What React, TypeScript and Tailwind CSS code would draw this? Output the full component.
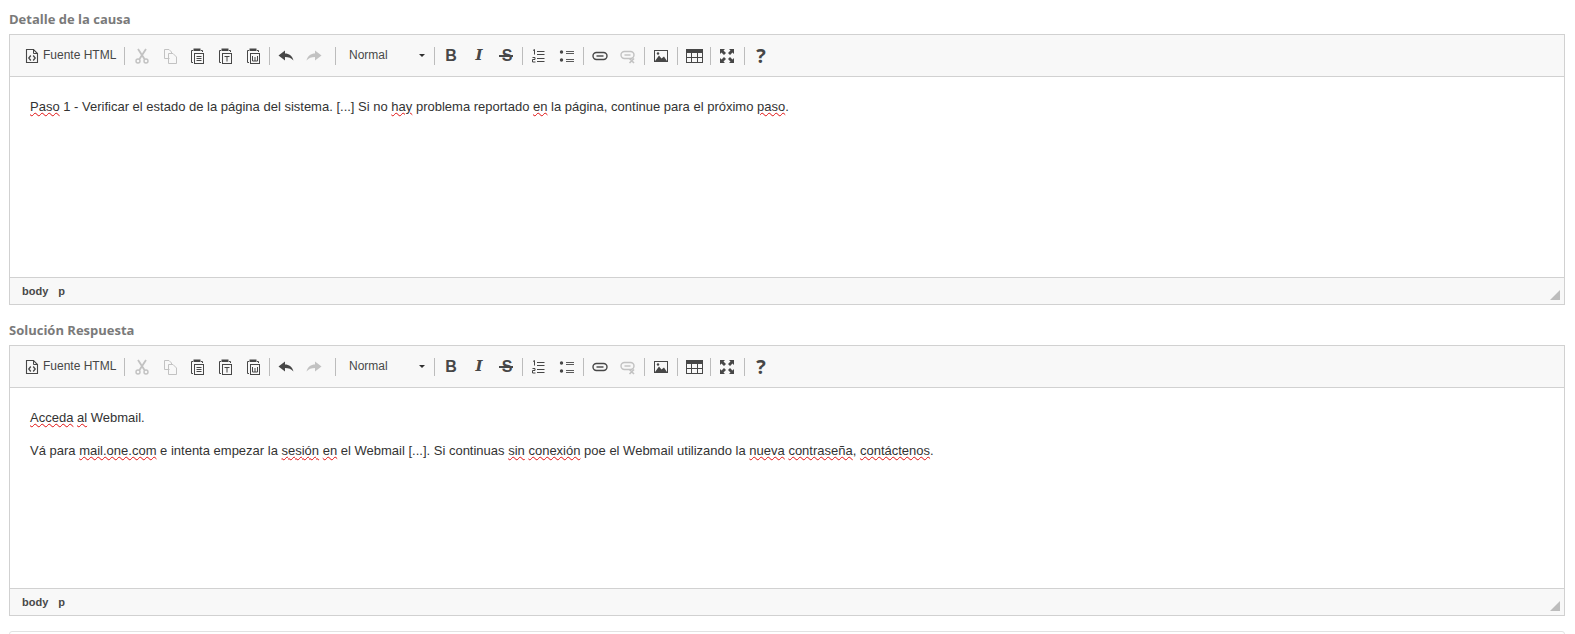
import type { ReactNode } from "react";

const arial = "font-['Liberation_Sans',Arial,sans-serif]";

function Sep({ className = "" }: { className?: string }) {
  return <span className={`h-[18px] w-px shrink-0 bg-[#bcbcbc] ${className}`} />;
}

function Btn({ children, off }: { children: ReactNode; off?: boolean }) {
  return (
    <span className={`flex h-[28px] w-[28px] shrink-0 items-center justify-center text-[#474747] ${off ? "opacity-30" : ""}`}>
      {children}
    </span>
  );
}

function Icon({ children }: { children: ReactNode }) {
  return (
    <svg width="16" height="16" viewBox="0 0 16 16" fill="none" stroke="currentColor" strokeWidth="1">
      {children}
    </svg>
  );
}

function Clipboard({ children }: { children: ReactNode }) {
  return (
    <Icon>
      <path d="M3 2.5H1.5V14.5H3M11 2.5H12.5V4" />
      <path d="M3.5 0.5H10.5V3H3.5Z" fill="currentColor" stroke="none" />
      <rect x="4.5" y="5.5" width="9" height="10" />
      {children}
    </Icon>
  );
}

function Toolbar() {
  return (
    <div className="flex h-[42px] items-center border-b border-[#d1d1d1] bg-[#f8f8f8] pl-[14px]">
      <div className={`flex w-[100px] shrink-0 items-center ${arial} text-[12px] text-[#474747]`}>
        <span className="flex text-[#474747]">
          <Icon>
            <path d="M2.5 1.5H9.5L13.5 5.5V14.5H2.5Z" strokeWidth="1.1" />
            <path d="M9.5 1.5V5.5H13.5" />
            <path d="M6.8 7.5L4.8 10L6.8 12.5M9.2 7.5L11.2 10L9.2 12.5" strokeWidth="1.3" />
          </Icon>
        </span>
        <span className="mb-[2px] ml-[3px] whitespace-nowrap">Fuente HTML</span>
      </div>
      <Sep className="mr-[3px]" />
      <Btn off>
        <Icon>
          <path d="M4 1L10.5 11M12 1L5.5 11" strokeWidth="1.8" />
          <circle cx="4" cy="13" r="2" strokeWidth="1.4" />
          <circle cx="12" cy="13" r="2" strokeWidth="1.4" />
        </Icon>
      </Btn>
      <Btn off>
        <Icon>
          <path d="M7.5 10.5H2.5V1.5H7L9.5 4V5" />
          <path d="M6.5 5.5H11L14.5 9V15.5H6.5Z" />
        </Icon>
      </Btn>
      <Btn>
        <Clipboard>
          <path d="M6.5 8.5H11.5M6.5 10.5H11.5M6.5 12.5H11.5" />
        </Clipboard>
      </Btn>
      <Btn>
        <Clipboard>
          <path d="M6.5 8.5H11.5M9 8.5V13.5" />
        </Clipboard>
      </Btn>
      <Btn>
        <Clipboard>
          <path d="M6.5 8V13H11.5V8M9 9V13" />
        </Clipboard>
      </Btn>
      <Sep className="ml-px mr-[2px]" />
      <Btn>
        <Icon>
          <path d="M0.5 7.5L7 2.5V5.5C11 5.5 14.5 8 15.5 12.5C13.5 10 10.5 9 7 9V12.5Z" fill="currentColor" stroke="none" />
        </Icon>
      </Btn>
      <Btn off>
        <Icon>
          <path d="M15.5 7.5L9 2.5V5.5C5 5.5 1.5 8 0.5 12.5C2.5 10 5.5 9 9 9V12.5Z" fill="currentColor" stroke="none" />
        </Icon>
      </Btn>
      <Sep className="ml-[7px]" />
      <div className={`flex w-[98px] shrink-0 items-center pl-[13px] ${arial} text-[12px] text-[#484848]`}>
        <span className="mb-[2px]">Normal</span>
        <span className="ml-[31px] h-0 w-0 border-x-[3px] border-t-[3px] border-x-transparent border-t-[#2f2f2f]" />
      </div>
      <Sep className="mr-[2px]" />
      <Btn>
        <span className={`${arial} text-[16px] font-bold leading-none`}>B</span>
      </Btn>
      <Btn>
        <span className="font-['DejaVu_Serif',serif] text-[15px] font-bold italic leading-none">I</span>
      </Btn>
      <Btn>
        <span className={`relative ${arial} text-[16px] font-bold leading-none`}>
          S
          <span className="absolute left-[-3px] top-[7px] h-[2px] w-[14px] bg-[#474747]" />
        </span>
      </Btn>
      <Sep className="ml-px mr-[2px]" />
      <Btn>
        <Icon>
          <path d="M6 3.5H13.5M6 6.5H13.5M6 10.5H13.5M6 13.5H13.5" />
          <path d="M2 2.5L3.5 1.5V6.5M1.5 9.5H4V11.5H1.5V14H4.5" />
        </Icon>
      </Btn>
      <Btn>
        <Icon>
          <circle cx="2.5" cy="4" r="1.7" fill="currentColor" stroke="none" />
          <circle cx="2.5" cy="12" r="1.7" fill="currentColor" stroke="none" />
          <path d="M7 3.5H15M7 11.5H15M7 5.5H15M7 13.5H15" strokeWidth="0.9" />
        </Icon>
      </Btn>
      <Sep className="ml-[2px] mr-[2px]" />
      <Btn>
        <Icon>
          <rect x="1" y="4.5" width="14" height="7" rx="3.5" strokeWidth="1.4" />
          <path d="M4.5 8H11.5" strokeWidth="1.4" />
        </Icon>
      </Btn>
      <Btn off>
        <Icon>
          <rect x="1" y="3.5" width="13" height="7" rx="3.5" strokeWidth="1.4" />
          <path d="M4.5 7H10.5" strokeWidth="1.4" />
          <path d="M9.5 10.5L14 15M14 10.5L9.5 15" strokeWidth="1.6" />
        </Icon>
      </Btn>
      <Sep className="ml-[2px] mr-[2px]" />
      <Btn>
        <Icon>
          <rect x="1.5" y="2.5" width="13" height="11" />
          <path d="M2 13L6 7.5L8.5 10.5L11 8.5L14 13Z" fill="currentColor" stroke="none" />
          <circle cx="5" cy="5.5" r="1.2" fill="currentColor" stroke="none" />
        </Icon>
      </Btn>
      <Sep className="ml-[2px] mr-[2px]" />
      <Btn>
        <svg width="17" height="16" viewBox="0 0 17 16" fill="none" stroke="currentColor">
          <rect x="0.5" y="1.5" width="16" height="13" />
          <path d="M0 3.5H17" strokeWidth="3" />
          <path d="M0.5 9.5H16.5M5.5 5V14M11.5 5V14" />
        </svg>
      </Btn>
      <Sep className="ml-[2px] mr-[2px]" />
      <Btn>
        <Icon>
          <path d="M1 1H6L4.5 2.5L7 5L5 7L2.5 4.5L1 6Z" fill="currentColor" stroke="none" />
          <path d="M15 1H10L11.5 2.5L9 5L11 7L13.5 4.5L15 6Z" fill="currentColor" stroke="none" />
          <path d="M1 15H6L4.5 13.5L7 11L5 9L2.5 11.5L1 10Z" fill="currentColor" stroke="none" />
          <path d="M15 15H10L11.5 13.5L9 11L11 9L13.5 11.5L15 10Z" fill="currentColor" stroke="none" />
        </Icon>
      </Btn>
      <Sep className="ml-[3px] mr-[2px]" />
      <Btn>
        <span className="font-['Open_Sans',sans-serif] text-[20px] font-bold leading-none">?</span>
      </Btn>
    </div>
  );
}

function Err({ children }: { children: ReactNode }) {
  return <span className="underline decoration-[#e01010] decoration-wavy decoration-1 underline-offset-[1px]">{children}</span>;
}

function Editor({ label, children }: { label: string; children: ReactNode }) {
  return (
    <section>
      <h2 className="flex h-[21px] items-center pb-[8px] font-['Open_Sans',sans-serif] text-[13px] font-bold text-[#7a7a7a]">{label}</h2>
      <div className="border border-[#d1d1d1]">
        <Toolbar />
        <div className={`h-[200px] bg-white px-[20px] py-[20px] ${arial} text-[13px] leading-[20px] text-[#333333]`}>{children}</div>
        <div className={`relative flex h-[27px] items-center gap-[10px] border-t border-[#d1d1d1] bg-[#f8f8f8] pl-[12px] ${arial} text-[11px] font-bold text-[#484848]`}>
          <span>body</span>
          <span>p</span>
          <span className="absolute bottom-[4px] right-[4px] h-0 w-0 border-b-[10px] border-l-[10px] border-b-[#bdbdbd] border-l-transparent" />
        </div>
      </div>
    </section>
  );
}

export default function App() {
  return (
    <div className="h-[634px] overflow-hidden bg-white pl-[9px] pr-[10px] pt-[13px]">
      <Editor label="Detalle de la causa">
        <p>
          <Err>Paso</Err> 1 - Verificar el estado de la página del sistema. [...] Si no <Err>hay</Err> problema reportado <Err>en</Err> la página, continue para el próximo <Err>paso</Err>.
        </p>
      </Editor>
      <div className="mt-[19px]">
        <Editor label="Solución Respuesta">
          <p>
            <Err>Acceda</Err> <Err>al</Err> Webmail.
          </p>
          <p className="mt-[13px]">
            Vá para <Err>mail.one.com</Err> e intenta empezar la <Err>sesión</Err> <Err>en</Err> el Webmail [...]. Si continuas <Err>sin</Err> <Err>conexión</Err> poe el Webmail utilizando la <Err>nueva</Err> <Err>contraseña</Err>, <Err>contáctenos</Err>.
          </p>
        </Editor>
      </div>
      <div className="mt-[15px] h-[40px] rounded-t-[3px] border border-[#e2e2e2]" />
    </div>
  );
}
